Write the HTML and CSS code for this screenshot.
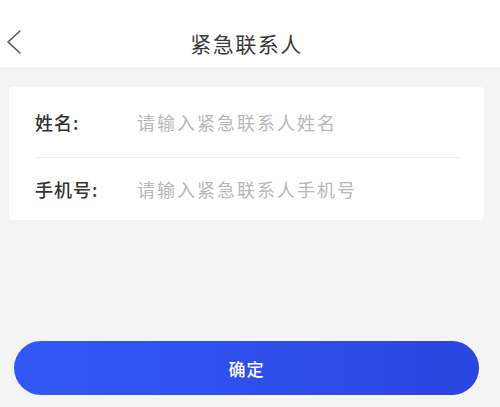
FILE: index.html
```html
<!DOCTYPE html>
<html lang="zh-CN">
<head>
  <meta charset="UTF-8" />
  <meta name="viewport" content="width=device-width, initial-scale=1.0" />
  <title>紧急联系人</title>
  <link rel="stylesheet" href="styles.css">
</head>
<body>
  <div class="header">
    <span class="back">
      <svg width="18" height="26" viewBox="0 0 18 26">
        <path d="M15 2 L3 13 L15 24" fill="none" stroke="#555" stroke-width="1.6" stroke-linecap="round" stroke-linejoin="round"/>
      </svg>
    </span>
    <div class="title">紧急联系人</div>
  </div>

  <div class="content">
    <div class="card">
      <div class="row first">
        <span class="label">姓名:</span>
        <input class="field" type="text" placeholder="请输入紧急联系人姓名">
      </div>
      <div class="divider"></div>
      <div class="row">
        <span class="label">手机号:</span>
        <input class="field" type="text" placeholder="请输入紧急联系人手机号">
      </div>
    </div>

    <button class="submit">确定</button>
  </div>
</body>
</html>
```

FILE: styles.css
```css
html, body {
  margin: 0;
  padding: 0;
  height: 100%;
}

body {
  background-color: #f4f4f4;
  font-family: "Noto Sans CJK SC", "Noto Sans", sans-serif;
  color: #333;
}

.header {
  position: relative;
  height: 67px;
  background-color: #fff;
  display: flex;
  align-items: center;
  justify-content: center;
  padding-right: 7px;
}

.back {
  position: absolute;
  left: 5px;
  top: 29px;
  display: flex;
}

.title {
  font-size: 21px;
  letter-spacing: 1.5px;
  color: #3a3a3a;
  margin-top: 18px;
}

.content {
  padding: 20px 16px 0 9px;
}

.card {
  background-color: #fff;
  border-radius: 4px;
}

.row {
  display: flex;
  align-items: center;
  height: 62px;
  padding-left: 26px;
}

.row.first {
  height: 70px;
}

.label {
  width: 102px;
  font-size: 18px;
  font-weight: 500;
  letter-spacing: 1px;
  color: #333;
}

.field {
  flex: 1;
  border: none;
  outline: none;
  background: transparent;
  font-family: inherit;
  font-size: 18px;
  letter-spacing: 2px;
  padding: 0;
  color: #333;
}

.field::placeholder {
  color: #b8b8b8;
}

.divider {
  height: 1px;
  background-color: #f0f0f0;
  margin: 0 23px 0 26px;
}

.submit {
  display: block;
  width: 465px;
  height: 54px;
  margin: 121px 0 0 5px;
  border: none;
  border-radius: 27px;
  background: linear-gradient(90deg, #3259f7, #2a45e0);
  color: #fff;
  font-family: inherit;
  font-size: 17px;
  font-weight: 500;
  letter-spacing: 1px;
}
```
